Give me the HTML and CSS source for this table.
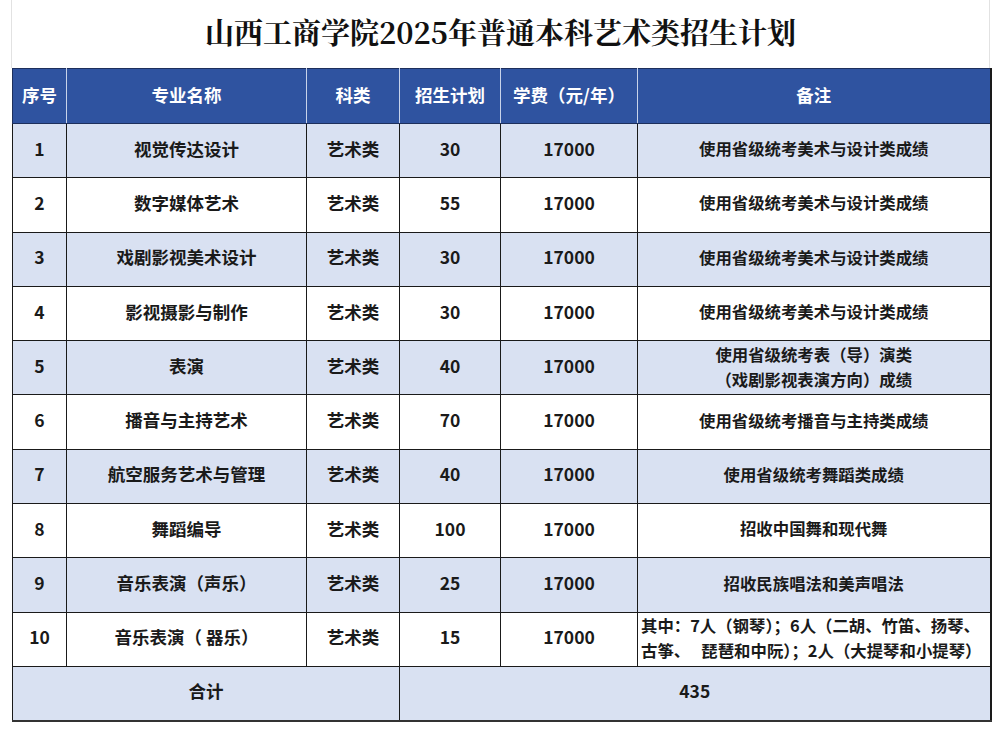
FILE: index.html
```html
<!DOCTYPE html>
<html lang="zh-CN">
<head>
<meta charset="utf-8">
<title>山西工商学院2025年普通本科艺术类招生计划</title>
<link rel="stylesheet" href="styles.css">
</head>
<body>
<div class="sheet">
  <div class="title">山西工商学院2025年普通本科艺术类招生计划</div>
  <table class="plan">
    <colgroup>
      <col class="c-no"><col class="c-major"><col class="c-type"><col class="c-plan"><col class="c-fee"><col class="c-note">
    </colgroup>
    <thead>
      <tr><th>序号</th><th>专业名称</th><th>科类</th><th>招生计划</th><th>学费（元/年）</th><th>备注</th></tr>
    </thead>
    <tbody>
      <tr class="alt"><td>1</td><td>视觉传达设计</td><td>艺术类</td><td>30</td><td>17000</td><td class="note">使用省级统考美术与设计类成绩</td></tr>
      <tr><td>2</td><td>数字媒体艺术</td><td>艺术类</td><td>55</td><td>17000</td><td class="note">使用省级统考美术与设计类成绩</td></tr>
      <tr class="alt"><td>3</td><td>戏剧影视美术设计</td><td>艺术类</td><td>30</td><td>17000</td><td class="note">使用省级统考美术与设计类成绩</td></tr>
      <tr><td>4</td><td>影视摄影与制作</td><td>艺术类</td><td>30</td><td>17000</td><td class="note">使用省级统考美术与设计类成绩</td></tr>
      <tr class="alt"><td>5</td><td>表演</td><td>艺术类</td><td>40</td><td>17000</td><td class="note two">使用省级统考表（导）演类<br>（戏剧影视表演方向）成绩</td></tr>
      <tr><td>6</td><td>播音与主持艺术</td><td>艺术类</td><td>70</td><td>17000</td><td class="note">使用省级统考播音与主持类成绩</td></tr>
      <tr class="alt"><td>7</td><td>航空服务艺术与管理</td><td>艺术类</td><td>40</td><td>17000</td><td class="note">使用省级统考舞蹈类成绩</td></tr>
      <tr><td>8</td><td>舞蹈编导</td><td>艺术类</td><td>100</td><td>17000</td><td class="note">招收中国舞和现代舞</td></tr>
      <tr class="alt"><td>9</td><td>音乐表演（声乐）</td><td>艺术类</td><td>25</td><td>17000</td><td class="note">招收民族唱法和美声唱法</td></tr>
      <tr><td>10</td><td>音乐表演（ 器乐）</td><td>艺术类</td><td>15</td><td>17000</td><td class="note two left">其中：7人（钢琴）；6人（二胡、竹笛、扬琴、<br>古筝、&nbsp;&nbsp;&nbsp;琵琶和中阮）；2人（大提琴和小提琴）</td></tr>
      <tr class="alt total"><td colspan="3">合计</td><td colspan="3">435</td></tr>
    </tbody>
  </table>
</div>
</body>
</html>
```
FILE: styles.css
```css
html, body {
  margin: 0;
  padding: 0;
  background: #ffffff;
}

.sheet {
  width: 980px;
  padding-left: 11px;
}

.title {
  height: 68px;
  box-sizing: border-box;
  border-left: 1px solid #e2e2e2;
  border-right: 1px solid #e2e2e2;
  margin-right: 1px;
  display: flex;
  align-items: center;
  justify-content: center;
  padding-bottom: 5px;
  font-family: "Noto Serif CJK SC", "Liberation Serif", "Noto Sans CJK SC", serif;
  font-weight: bold;
  font-size: 29px;
  color: #111111;
}

.plan {
  width: 979px;
  margin-left: 1px;
  border-collapse: collapse;
  table-layout: fixed;
  font-family: "Noto Sans CJK SC", "Noto Sans", sans-serif;
  font-weight: bold;
  color: #1a1a1a;
}

.c-no { width: 54px; }
.c-major { width: 240px; }
.c-type { width: 93px; }
.c-plan { width: 101px; }
.c-fee { width: 137px; }
.c-note { width: 353px; }

.plan thead tr { height: 55px; }
.plan tbody tr { height: 54.3px; }

.plan th {
  padding: 0 0 3px 0;
  background: #2f53a0;
  color: #ffffff;
  font-size: 17.5px;
  font-weight: bold;
  border: 1px solid #c9d3ea;
  border-top: 1px solid #1d2f5c;
  border-bottom: 1px solid #1d2f5c;
}

.plan th:first-child { border-left: 1px solid #1d2f5c; }
.plan th:last-child { border-left: 1px solid #1d2f5c; border-right: 2px solid #1a1a1a; }

.plan td {
  padding: 0 0 5px 0;
  text-align: center;
  vertical-align: middle;
  font-size: 17.5px;
  border: 1px solid #1a1a1a;
  background: #ffffff;
}

.plan td:last-child { border-right: 2px solid #1a1a1a; }

.plan tr.alt td { background: #d9e1f2; }

.plan td.note {
  font-size: 16.4px;
  line-height: 24px;
}

.plan td.two {
  line-height: 25px;
  padding-bottom: 2px;
}

.plan td.left {
  text-align: left;
  padding-left: 3px;
  white-space: nowrap;
}

.plan tr.total td {
  border-bottom: 2px solid #333333;
}
```
